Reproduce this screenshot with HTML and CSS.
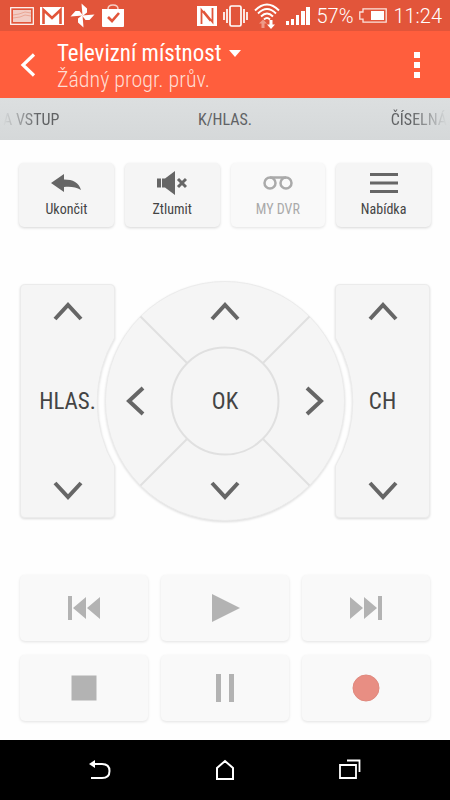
FILE: index.html
```html
<!DOCTYPE html>
<html lang="cs">
<head>
<meta charset="utf-8">
<meta name="viewport" content="width=device-width, initial-scale=1">
<title>Televizní místnost</title>
<link rel="stylesheet" href="styles.css">
</head>
<body>
<div class="status">
  <div class="status-group">
    <svg width="24" height="18" viewBox="0 0 24 18"><rect x=".7" y=".7" width="22.6" height="16.6" fill="none" stroke="#fff" stroke-width="1.2"/><rect x="3" y="3" width="18" height="12" fill="#f2ccc4"/><path d="M3 8l6-1 6-2 6 1M3 11l7-1 5-2 6 1" fill="none" stroke="#eaa796"/></svg>
    <svg width="24" height="18" viewBox="0 0 24 18"><path d="M0 0h24v18H0z" fill="#fff"/><path d="M3.500 17V3L12 11l8.500-8v14" fill="none" stroke="#e2553a" stroke-width="2.600"/></svg>
    <svg width="25" height="25" viewBox="0 0 25 25"><g fill="#fff"><path id="blade" d="M12.500 13L11.500 0.500l5.500 5v4z"/><use href="#blade" transform="rotate(90 12.500 12.500)"/><use href="#blade" transform="rotate(180 12.500 12.500)"/><use href="#blade" transform="rotate(270 12.500 12.500)"/></g></svg>
    <svg width="24" height="24" viewBox="0 0 24 24"><path d="M7 7V5q0-4 5-4t5 4v2" fill="none" stroke="#f6cfc5" stroke-width="1.500"/><path d="M1 5h22v17q0 1-1 1H2q-1 0-1-1z" fill="#fff"/><path d="M7 13l4 4 7-8" fill="none" stroke="#e2553a" stroke-width="2.600"/></svg>
  </div>
  <div class="status-group status-right">
    <svg width="20" height="20" viewBox="0 0 20 20"><path d="M0 0h20v20H0z" fill="#fff"/><path d="M4.500 18V4l9 11M15.500 2v14l-9-11" fill="none" stroke="#e2553a" stroke-width="1.800"/></svg>
    <svg width="25" height="22" viewBox="0 0 25 22"><g fill="none" stroke="#fff" stroke-width="1.700"><rect x="7" y="1" width="11" height="20" rx="1.500"/><path d="M4 4v14M21 4v14M1 7v8M24 7v8"/></g></svg>
    <svg width="26" height="26" viewBox="0 0 26 26"><g fill="none" stroke="#fff" stroke-width="1.900"><path d="M1 7.500q12-12 24 0M4 10.500q9-9 18 0M7 13.500q6-6 12 0M10 16.500q3-3 6 0"/></g><path d="M9 16.500l-4 4h2.500V25h3v-4.500H13z" fill="#ee9a87"/><path d="M17 26l-4-4.500h2.500V17h3v4.500H21z" fill="#fff"/></svg>
    <svg width="24" height="18" viewBox="0 0 24 18"><path d="M0 14h3v4H0zM5 12h3v6H5zM10 8h3v10h-3zM15 4h4v14h-4zM20 0h4v18h-4z" fill="#fff"/></svg>
    <span>57%</span>
    <svg width="28" height="15" viewBox="0 0 28 15"><path d="M4 .8h23.200v13.400H4v-3H.8V4H4z" fill="none" stroke="#fbe3dd" stroke-width="1.300"/><path d="M12 3h13v9H12z" fill="#fff"/></svg>
    <span>11:24</span>
  </div>
</div>

<header class="appbar">
  <button class="plain back" aria-label="Zpět"><svg width="16" height="24" viewBox="0 0 16 24"><path d="M14 1.500L3 12l11 10.500" fill="none" stroke="#fff" stroke-width="3.200"/></svg></button>
  <div class="heading">
    <button class="plain room">Televizní místnost <svg width="12" height="7" viewBox="0 0 12 7"><path d="M0 0h12L6 7z" fill="#fff"/></svg></button>
    <p class="sub">Žádný progr. prův.</p>
  </div>
  <button class="plain more" aria-label="Další možnosti"><svg width="6" height="26" viewBox="0 0 6 26"><path d="M0 0h6v6H0zM0 10h6v6H0zM0 20h6v6H0z" fill="#fff"/></svg></button>
</header>

<nav class="tabs">
  <a href="#">A VSTUP</a>
  <a href="#">K/HLAS.</a>
  <a href="#">ČÍSELNÁ</a>
</nav>

<main>
  <div class="actions">
    <button class="key"><svg width="30" height="24" viewBox="0 0 30 24"><path d="M0 12L13 3v5.500c9 0 15 3 17 10.500-5-3-10-3.500-17-3V21z" fill="#666"/></svg>Ukončit</button>
    <button class="key"><svg width="30" height="24" viewBox="0 0 30 24"><path d="M0 7.500h4v9H0zM5 7.500h3L18 0v24L8 16.500H5z" fill="#666"/><path d="M21 8l8 8M29 8l-8 8" stroke="#666" stroke-width="3"/></svg>Ztlumit</button>
    <button class="key off" disabled><svg width="30" height="24" viewBox="0 0 30 24"><g fill="none" stroke="#aaa" stroke-width="2.500"><circle cx="7" cy="12" r="5.500"/><circle cx="23" cy="12" r="5.500"/><path d="M7 6.500h16"/></g></svg>MY DVR</button>
    <button class="key"><svg width="28" height="24" viewBox="0 0 28 24"><path d="M0 2h28v3H0zM0 10.500h28v3H0zM0 19h28v3H0z" fill="#666"/></svg>Nabídka</button>
  </div>

  <div class="remote">
    <div class="rocker">
      <svg class="plate" viewBox="0 0 95 234"><path d="M5 .5H90q4.500 0 4.500 4.500V54A127 127 0 0 0 94.500 182V229q0 4.500-4.500 4.500H5q-4.500 0-4.500-4.500V5q0-4.500 4.500-4.500z"/></svg>
      <button class="plain" aria-label="Hlasitost nahoru"><svg class="chev" viewBox="0 0 30 20"><path d="M2 18L15 4l13 14"/></svg></button>
      <span>HLAS.</span>
      <button class="plain" aria-label="Hlasitost dolů"><svg class="chev" viewBox="0 0 30 20"><path d="M2 2l13 14L28 2"/></svg></button>
    </div>
    <div class="dpad">
      <svg class="plate" viewBox="0 0 240 240"><circle cx="120" cy="120" r="119.500"/><g class="seams"><circle cx="120" cy="120" r="53.500"/><path d="M35.500 35.500L82 82M204.500 35.500L158 82M35.500 204.500L82 158M204.500 204.500L158 158"/></g></svg>
      <button class="plain up" aria-label="Nahoru"><svg class="chev" viewBox="0 0 30 20"><path d="M2 18L15 4l13 14"/></svg></button>
      <button class="plain left" aria-label="Vlevo"><svg class="chev side" viewBox="0 0 20 30"><path d="M18 2L4 15l14 13"/></svg></button>
      <button class="plain ok">OK</button>
      <button class="plain right" aria-label="Vpravo"><svg class="chev side" viewBox="0 0 20 30"><path d="M2 2l14 13L2 28"/></svg></button>
      <button class="plain down" aria-label="Dolů"><svg class="chev" viewBox="0 0 30 20"><path d="M2 2l13 14L28 2"/></svg></button>
    </div>
    <div class="rocker">
      <svg class="plate" viewBox="0 0 95 234"><path d="M90 .5H5Q.5 .5 .5 5V54A127 127 0 0 1 .5 182V229q0 4.500 4.500 4.500H90q4.500 0 4.500-4.500V5q0-4.500-4.500-4.500z"/></svg>
      <button class="plain" aria-label="Další kanál"><svg class="chev" viewBox="0 0 30 20"><path d="M2 18L15 4l13 14"/></svg></button>
      <span>CH</span>
      <button class="plain" aria-label="Předchozí kanál"><svg class="chev" viewBox="0 0 30 20"><path d="M2 2l13 14L28 2"/></svg></button>
    </div>
  </div>

  <div class="media">
    <button class="key off" disabled aria-label="Předchozí"><svg width="32" height="24" viewBox="0 0 32 24"><path d="M0 0h4v24H0zM18 1v22L5 12zM32 1v22L19 12z" fill="#b3b3b3"/></svg></button>
    <button class="key off" disabled aria-label="Přehrát"><svg width="30" height="30" viewBox="0 0 30 30"><path d="M2 1l28 14L2 29z" fill="#b3b3b3"/></svg></button>
    <button class="key off" disabled aria-label="Další"><svg width="32" height="24" viewBox="0 0 32 24"><path d="M28 0h4v24h-4zM14 1v22l13-11zM0 1v22l13-11z" fill="#b3b3b3"/></svg></button>
    <button class="key off" disabled aria-label="Zastavit"><svg width="26" height="26" viewBox="0 0 26 26"><path d="M.5 .5h25v25H.5z" fill="#b3b3b3"/></svg></button>
    <button class="key off" disabled aria-label="Pozastavit"><svg width="18" height="28" viewBox="0 0 18 28"><path d="M0 0h5v28H0zM13 0h5v28h-5z" fill="#b3b3b3"/></svg></button>
    <button class="key off" disabled aria-label="Nahrávat"><svg width="28" height="28" viewBox="0 0 28 28"><circle cx="14" cy="14" r="13" fill="#e88e83" stroke="#e0897e"/></svg></button>
  </div>
</main>

<footer class="sysnav">
  <button class="plain" aria-label="Zpět"><svg width="22" height="22" viewBox="0 0 22 22"><path d="M0 5l6-4v8z" fill="#fff"/><path d="M5 5h8q7.500 0 7.500 7t-7.500 7H2" fill="none" stroke="#fff" stroke-width="2"/></svg></button>
  <button class="plain" aria-label="Domů"><svg width="22" height="22" viewBox="0 0 22 22"><path d="M3 20V9l8-7 8 7v11z" fill="none" stroke="#fff" stroke-width="2"/></svg></button>
  <button class="plain" aria-label="Poslední aplikace"><svg width="22" height="22" viewBox="0 0 22 22"><path d="M1 6h16v13H1zM8 1.500h12.500V13" fill="none" stroke="#fff" stroke-width="1.800"/></svg></button>
</footer>
</body>
</html>
```
FILE: styles.css
```css
* {
  box-sizing: border-box;
}

body {
  margin: 0;
  min-height: 100vh;
  display: flex;
  flex-direction: column;
  background: #fefefe;
  color: #444;
  font-family: "Roboto Condensed", "Liberation Sans Narrow", Roboto, sans-serif;
}

svg {
  display: block;
  flex: none;
}

button {
  font: inherit;
  color: inherit;
}

.plain {
  display: flex;
  align-items: center;
  justify-content: center;
  padding: 0;
  border: 0;
  background: none;
}

.status {
  display: flex;
  align-items: center;
  justify-content: space-between;
  height: 31px;
  padding: 0 8px 0 10px;
  background: #e2553a;
  color: #fff;
  font: 300 20px/24px Roboto, sans-serif;
}

.status-group {
  display: flex;
  align-items: center;
  gap: 6px;
}

.appbar {
  display: flex;
  align-items: center;
  height: 67px;
  padding: 0 30px 0 20px;
  background: #ff5e3d;
  color: #fff;
}

.heading {
  flex: 1;
  padding: 4px 0 0 21px;
}

.room {
  gap: 7px;
  font-size: 23px;
  line-height: 27px;
}

.sub {
  margin: 0;
  font-size: 22px;
  font-weight: 300;
  line-height: 26px;
  color: #ffddd3;
}

.tabs {
  display: flex;
  align-items: center;
  justify-content: space-between;
  height: 42px;
  padding: 0 3px;
  background: linear-gradient(#dcdfe0, #d5d8d9);
}

.tabs a {
  flex: 1;
  padding-top: 2px;
  color: #606264;
  font-size: 16px;
  line-height: 20px;
  text-align: center;
  text-decoration: none;
}

.tabs a:first-child {
  text-align: left;
  mask-image: linear-gradient(90deg, transparent, #000 36px);
}

.tabs a:last-child {
  text-align: right;
  mask-image: linear-gradient(270deg, transparent, #000 36px);
}

main {
  flex: 1;
  display: flex;
  flex-direction: column;
  justify-content: space-between;
  gap: 54px;
  padding: 23px 19px 19px;
}

.actions {
  display: grid;
  grid-template-columns: repeat(4, 1fr);
  gap: 11px;
}

.key {
  display: flex;
  flex-direction: column;
  align-items: center;
  justify-content: center;
  gap: 4px;
  height: 64px;
  padding: 0;
  border: 0;
  border-radius: 5px;
  background: #f5f5f5;
  box-shadow: 0 1px 3px #d6d6d6;
  font-size: 14px;
  line-height: 20px;
}

.off {
  background: #f9f9f9;
  box-shadow: 0 1px 3px #e2e2e2;
  color: #aaa;
}

.remote {
  display: flex;
  align-items: center;
  justify-content: center;
  font-size: 23px;
}

.rocker {
  display: grid;
  grid-template: 54px 1fr 54px / 95px;
  place-items: center;
  height: 234px;
}

.rocker .plate {
  grid-area: 1 / 1 / 4 / 2;
  width: 95px;
  height: 234px;
}

.rocker .plain {
  width: 95px;
  height: 54px;
  grid-area: 1 / 1;
}

.rocker span {
  grid-area: 2 / 1;
}

.rocker .plain:last-child {
  grid-area: 3 / 1;
}

.dpad {
  display: grid;
  grid-template: 60px 120px 60px / 60px 120px 60px;
  margin: 0 -10px;
}

.dpad .plate {
  grid-area: 1 / 1 / 4 / 4;
  width: 240px;
  height: 240px;
}

.plate {
  overflow: visible;
  fill: #f5f5f5;
  stroke: #ebebeb;
  filter: drop-shadow(0 1px 1px #dadada);
}

.seams {
  fill: none;
  stroke: #e0e0e0;
  stroke-width: 2;
}

.up { grid-area: 1 / 2; }
.left { grid-area: 2 / 1; }
.ok { grid-area: 2 / 2; }
.right { grid-area: 2 / 3; }
.down { grid-area: 3 / 2; }

.rocker > *,
.dpad > * {
  z-index: 1;
}

.rocker > .plate,
.dpad > .plate {
  z-index: 0;
}

.chev {
  width: 30px;
  height: 20px;
  fill: none;
  stroke: #666;
  stroke-width: 4;
}

.side {
  width: 20px;
  height: 30px;
}

.media {
  display: grid;
  grid-template-columns: repeat(3, 1fr);
  gap: 14px 13px;
  padding: 0 1px;
}

.media .key {
  height: 66px;
}

.sysnav {
  display: flex;
  align-items: center;
  justify-content: center;
  gap: 103px;
  height: 60px;
  background: #000;
}
```
